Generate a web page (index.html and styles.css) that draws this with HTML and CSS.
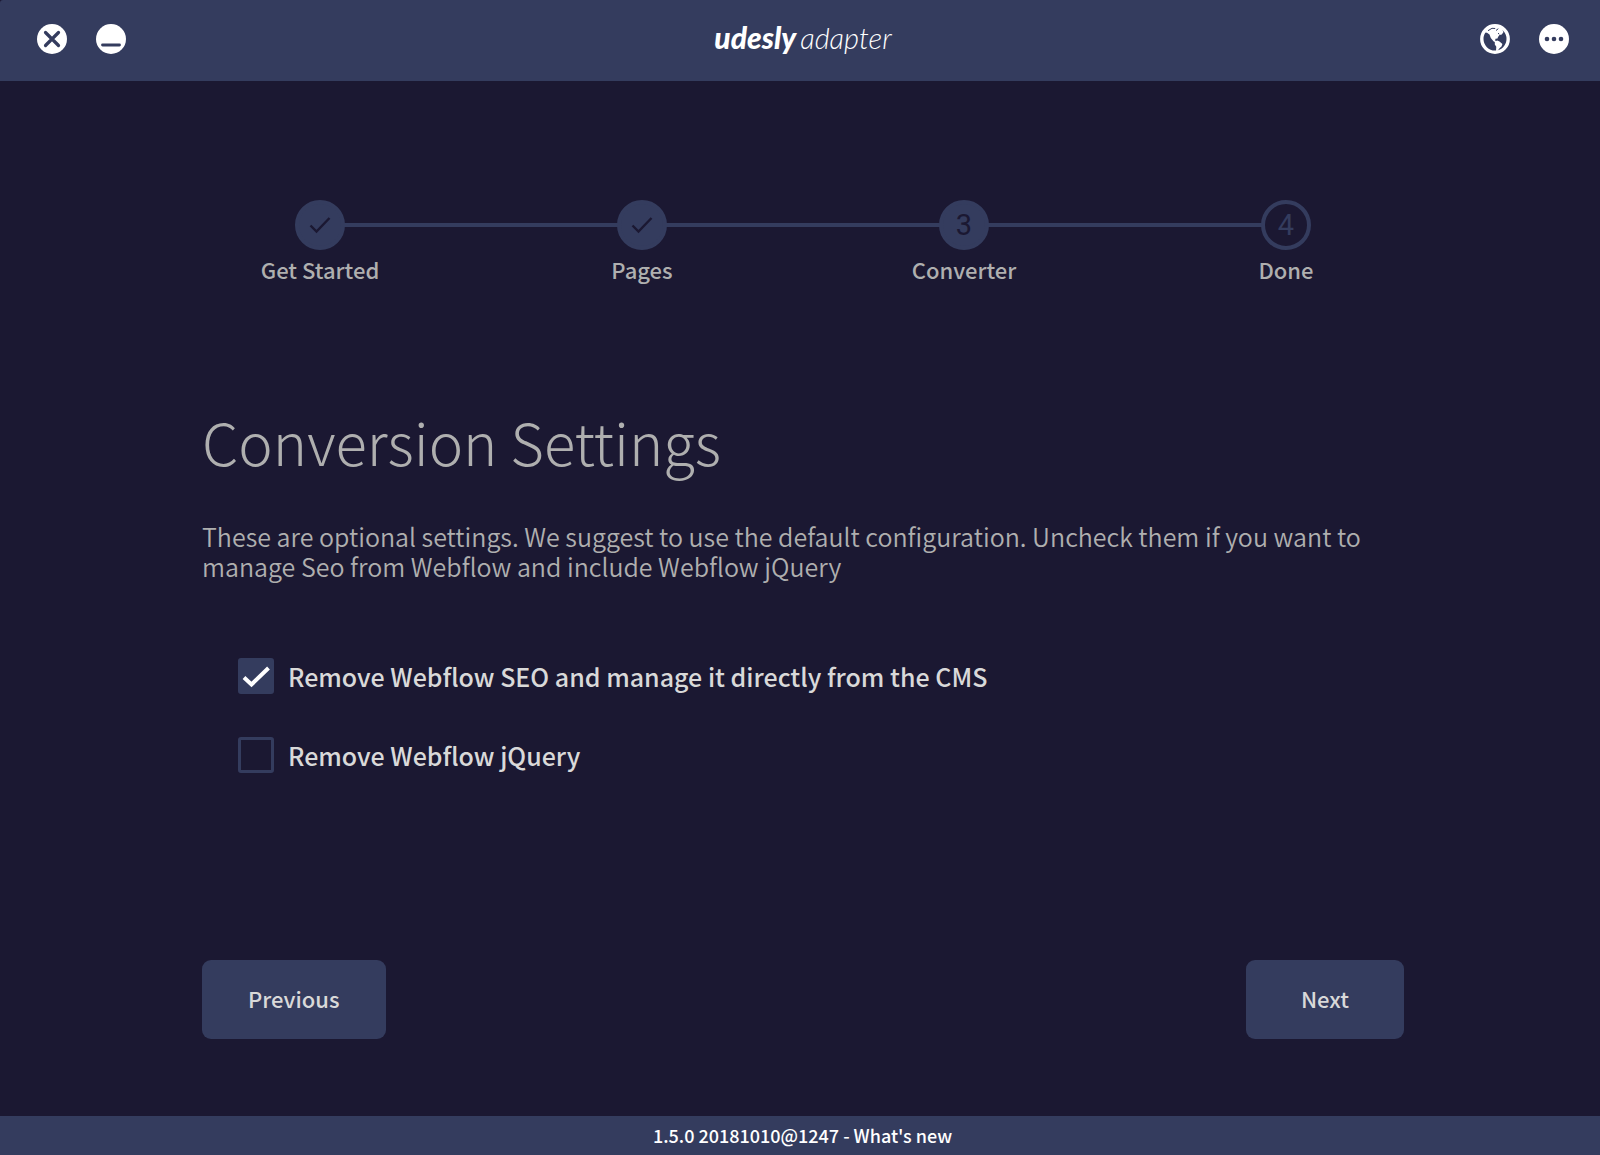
FILE: index.html
```html
<!DOCTYPE html>
<html lang="en">
<head>
<meta charset="utf-8">
<meta name="viewport" content="width=device-width, initial-scale=1">
<title>Udesly Adapter</title>
<link rel="stylesheet" href="styles.css">
</head>
<body>
<header class="titlebar">
  <div class="titlebar-group">
    <button class="icon-button" type="button" aria-label="Close">
      <svg viewBox="0 0 30 30"><circle cx="15" cy="15" r="15" fill="#fff"/><path d="M8.500 8.500l13 13M21.500 8.500l-13 13" stroke="#343c5e" stroke-width="3.2" stroke-linecap="round"/></svg>
    </button>
    <button class="icon-button" type="button" aria-label="Minimize">
      <svg viewBox="0 0 30 30"><circle cx="15" cy="15" r="15" fill="#fff"/><path d="M6.500 21h17" stroke="#343c5e" stroke-width="2.8" stroke-linecap="round"/></svg>
    </button>
  </div>
  <div class="logo"><span class="logo-name">udesly</span><span class="logo-product">adapter</span></div>
  <div class="titlebar-group">
    <button class="icon-button" type="button" aria-label="Language">
      <svg viewBox="0 0 30 30"><circle cx="15" cy="15" r="13.2" fill="none" stroke="#fff" stroke-width="3.4"/><path fill="#fff" d="M5 6.500L9 3l5-1.500 6 .8 4.500 3.200-2 .7 1 1.800-1.700 2.600-2.300.5-1.500 1.900-.5 1.600-2 .2-.4 1.700 1.400.7-.2 1.300-2.600-.9-2.900-3.600-1.300-3.500-2.500-1.700L5 8.500z"/><path fill="#fff" d="M14.800 17.600l2.400-1 2.300 1 2.900 2.500-.9 2.500-2 1.700-2.200 3-1.300-.5.300-4-1.500-2.300z"/><path d="M8 6.700l4-2.400 3.200.2M16 6.500l2.300-1.800M18 9.200l1.300 1" stroke="#343c5e" stroke-width="1" fill="none"/></svg>
    </button>
    <button class="icon-button" type="button" aria-label="More options">
      <svg viewBox="0 0 30 30"><circle cx="15" cy="15" r="15" fill="#fff"/><g fill="#343c5e"><circle cx="8" cy="15" r="2.3"/><circle cx="15" cy="15" r="2.3"/><circle cx="22" cy="15" r="2.3"/></g></svg>
    </button>
  </div>
</header>

<main class="content">
  <ol class="stepper">
    <li class="step">
      <span class="step-marker"><svg class="step-check" viewBox="0 0 24 20"><path d="M2.500 10.500l6 6L21.500 3" /></svg></span>
      <span class="step-label">Get Started</span>
    </li>
    <li class="step">
      <span class="step-marker"><svg class="step-check" viewBox="0 0 24 20"><path d="M2.500 10.500l6 6L21.500 3" /></svg></span>
      <span class="step-label">Pages</span>
    </li>
    <li class="step" aria-current="step">
      <span class="step-marker">3</span>
      <span class="step-label">Converter</span>
    </li>
    <li class="step">
      <span class="step-marker step-marker-pending">4</span>
      <span class="step-label">Done</span>
    </li>
  </ol>

  <form class="settings">
    <h1 class="settings-title">Conversion Settings</h1>
    <p class="settings-text">These are optional settings. We suggest to use the default configuration. Uncheck them if you want to manage Seo from Webflow and include Webflow jQuery</p>
    <div class="options">
      <label class="option"><input class="option-box" type="checkbox" checked>Remove Webflow SEO and manage it directly from the CMS</label>
      <label class="option"><input class="option-box" type="checkbox">Remove Webflow jQuery</label>
    </div>
    <div class="actions">
      <button class="button" type="button">Previous</button>
      <button class="button button-next" type="button">Next</button>
    </div>
  </form>
</main>

<footer class="statusbar">
  <a class="statusbar-link" href="#whats-new">1.5.0 20181010@1247 - What's new</a>
</footer>
</body>
</html>
```
FILE: styles.css
```css
:root {
  --panel: #343c5e;
  --page: #1b1832;
  --muted: #afafaf;
  --bright: #d9d9d9;
}

* {
  box-sizing: border-box;
}

body {
  margin: 0;
  min-height: 100vh;
  display: flex;
  flex-direction: column;
  background: var(--page);
  color: var(--muted);
  font-family: "Noto Sans CJK SC", "Noto Sans", sans-serif;
}

button {
  border: 0;
  font: inherit;
  cursor: pointer;
}

/* Title bar */
.titlebar {
  display: flex;
  align-items: center;
  justify-content: space-between;
  height: 81px;
  padding: 0 31px 3px 37px;
  background: var(--panel);
  border-top-left-radius: 3px;
}

.titlebar-group {
  display: flex;
  gap: 29px;
}

.icon-button {
  width: 30px;
  height: 30px;
  padding: 0;
  background: none;
}

.icon-button svg {
  display: block;
  width: 30px;
  height: 30px;
}

.logo {
  display: flex;
  align-items: baseline;
  gap: 4px;
  padding-bottom: 4px;
  color: #fff;
  font-family: Lato, sans-serif;
  font-style: italic;
  line-height: 36px;
}

.logo-name {
  font-size: 30px;
  font-weight: 900;
}

.logo-product {
  font-size: 29px;
  font-weight: 300;
}

/* Step indicator */
.content {
  flex: 1;
  display: flex;
  flex-direction: column;
  padding: 119px 153px 77px 159px;
}

.stepper {
  display: grid;
  grid-template-columns: repeat(4, 1fr);
  margin: 0;
  padding: 0;
  list-style: none;
}

.step {
  position: relative;
  display: flex;
  flex-direction: column;
  align-items: center;
}

.step:not(:last-child)::after {
  content: "";
  position: absolute;
  top: 23px;
  left: calc(50% + 24px);
  width: calc(100% - 48px);
  height: 4px;
  background: var(--panel);
}

.step-marker {
  display: flex;
  align-items: center;
  justify-content: center;
  width: 50px;
  height: 50px;
  border: 4px solid var(--panel);
  border-radius: 50%;
  background: var(--panel);
  color: var(--page);
  font-family: Roboto, sans-serif;
  font-size: 29px;
}

.step-marker-pending {
  background: none;
  color: var(--panel);
}

.step-check {
  width: 24px;
  height: 20px;
  fill: none;
  stroke: var(--page);
  stroke-width: 2.4;
}

.step-label {
  font-size: 22px;
  font-weight: 500;
  line-height: 38px;
}

/* Settings */
.settings {
  flex: 1;
  display: flex;
  flex-direction: column;
  padding: 0 43px;
}

.settings-title {
  margin: 113px 0 0;
  font-size: 58px;
  font-weight: 300;
  line-height: 80px;
}

.settings-text {
  margin: 40px 0 0;
  font-size: 25px;
  font-weight: 350;
  line-height: 30px;
}

.options {
  display: flex;
  flex-direction: column;
  align-items: flex-start;
  gap: 43px;
  padding: 77px 36px;
}

.option {
  display: flex;
  align-items: center;
  gap: 14px;
  color: var(--bright);
  font-size: 25px;
  font-weight: 500;
  line-height: 36px;
}

.option-box {
  appearance: none;
  flex: none;
  width: 36px;
  height: 36px;
  margin: 0;
  border: 3px solid var(--panel);
  border-radius: 3px;
}

.option-box:checked {
  background: var(--panel) url("data:image/svg+xml,%3Csvg xmlns='http://www.w3.org/2000/svg' viewBox='0 0 30 30'%3E%3Cpath d='M3 16.500l7.500 7L27.500 7' fill='none' stroke='%23fff' stroke-width='4'/%3E%3C/svg%3E") center / 30px 30px no-repeat;
}

.actions {
  display: flex;
  justify-content: space-between;
  margin-top: auto;
}

.button {
  height: 79px;
  padding: 0 46px 4px;
  border-radius: 9px;
  background: var(--panel);
  color: var(--bright);
  font-size: 22px;
  font-weight: 500;
}

.button-next {
  padding: 0 55px 4px;
}

/* Status bar */
.statusbar {
  display: flex;
  align-items: center;
  justify-content: center;
  height: 39px;
  padding: 0 0 2px 5px;
  background: var(--panel);
}

.statusbar-link {
  color: #fff;
  font-size: 18px;
  font-weight: 500;
  line-height: 30px;
  text-decoration: none;
}
```
